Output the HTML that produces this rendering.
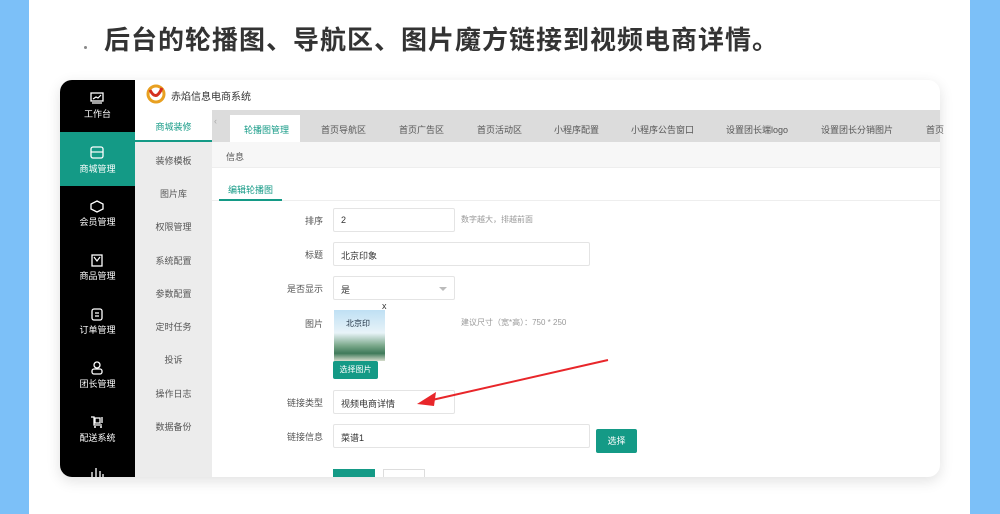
<!DOCTYPE html>
<html><head><meta charset="utf-8"><style>
*{margin:0;padding:0;box-sizing:border-box}
body{width:1000px;height:514px;overflow:hidden;background:#fff;font-family:"Liberation Sans","Noto Sans CJK SC",sans-serif;position:relative}
.a{position:absolute}
.bl{background:#7cc0f8;top:0;height:514px}
.t{font-size:9px;color:#555;white-space:nowrap}
.nav{color:#fff;font-size:9px;text-align:center;width:75px;left:60px}
.sub{left:135px;width:77px;text-align:center;font-size:9px;color:#555}
.in{border:1px solid #e4e4e4;background:#fff;height:24px;font-size:9px;color:#333;padding:6px 7px;border-radius:2px}
.lab{font-size:9px;color:#555;text-align:right;width:80px;left:243px}
.btn{background:#149a86;color:#fff;font-size:9px;border-radius:2px;text-align:center}
</style></head><body>
<div class="a bl" style="left:0;width:29px"></div>
<div class="a bl" style="left:970px;width:30px"></div>
<div class="a" style="left:84px;top:46px;width:3px;height:3px;background:#888;border-radius:50%"></div>
<div class="a" style="left:104px;top:20px;font-size:26px;font-weight:bold;color:#333;letter-spacing:1px;white-space:nowrap">后台的轮播图、导航区、图片魔方链接到视频电商详情。</div>

<div class="a" style="left:60px;top:80px;width:880px;height:397px;border-radius:12px;overflow:hidden;background:#fff;box-shadow:0 4px 14px rgba(0,0,0,.12)">
</div>
<div class="a" style="left:60px;top:80px;width:880px;height:397px;border-radius:12px;overflow:hidden">
 <div class="a" style="left:0;top:0;width:75px;height:397px;background:#000"></div>
 <div class="a" style="left:0;top:52px;width:75px;height:54px;background:#149a86"></div>
 <div class="a" style="left:75px;top:30px;width:77px;height:367px;background:#ececec"></div>
 <div class="a" style="left:75px;top:30px;width:77px;height:32px;background:#fff;border-bottom:2px solid #149a86"></div>
 <div class="a" style="left:152px;top:30px;width:728px;height:32px;background:#dcdcdc"></div>
 <div class="a" style="left:170px;top:35px;width:70px;height:27px;background:#fff"></div>
 <div class="a" style="left:152px;top:62px;width:728px;height:26px;background:#f7f7f7;border-bottom:1px solid #eee"></div>
 <div class="a" style="left:152px;top:120px;width:728px;height:1px;background:#eee"></div>
 <div class="a" style="left:159px;top:119px;width:63px;height:2px;background:#149a86"></div>
</div>
<!-- header -->
<svg class="a" style="left:146px;top:84px" width="20" height="20" viewBox="0 0 20 20"><circle cx="10" cy="10" r="8" fill="none" stroke="#e8a020" stroke-width="3"/><path d="M4 6 Q10 18 16 4" stroke="#d43020" stroke-width="3" fill="none"/></svg>
<div class="a t" style="left:171px;top:88px;font-size:10px;color:#333">赤焰信息电商系统</div>
<!-- nav -->
<svg class="a" style="left:90px;top:92px" width="14" height="12"><rect x="1" y="1" width="12" height="8" fill="none" stroke="#fff" stroke-width="1.3"/><path d="M3 7 L6 5 L8 6 L11 3 M2 11 H12" stroke="#fff" fill="none" stroke-width="1.2"/></svg>
<div class="a nav" style="top:107px">工作台</div>
<svg class="a" style="left:90px;top:146px" width="14" height="13"><rect x="1" y="1" width="12" height="11" rx="2" fill="none" stroke="#fff" stroke-width="1.3"/><path d="M1 6 H13" stroke="#fff" stroke-width="1.2"/></svg>
<div class="a nav" style="top:162px">商城管理</div>
<svg class="a" style="left:90px;top:200px" width="14" height="13"><path d="M7 1 L13 4 V9 L7 12 L1 9 V4 Z" fill="none" stroke="#fff" stroke-width="1.3"/></svg>
<div class="a nav" style="top:215px">会员管理</div>
<svg class="a" style="left:90px;top:254px" width="14" height="13"><rect x="2" y="1" width="10" height="11" fill="none" stroke="#fff" stroke-width="1.3"/><path d="M4 3 L7 7 L10 3" stroke="#fff" fill="none" stroke-width="1.2"/></svg>
<div class="a nav" style="top:269px">商品管理</div>
<svg class="a" style="left:90px;top:308px" width="14" height="13"><rect x="2" y="1" width="10" height="11" rx="2" fill="none" stroke="#fff" stroke-width="1.3"/><path d="M5 5 H9 M5 8 H9" stroke="#fff" stroke-width="1.2"/></svg>
<div class="a nav" style="top:323px">订单管理</div>
<svg class="a" style="left:90px;top:361px" width="14" height="14"><circle cx="7" cy="4" r="3" fill="none" stroke="#fff" stroke-width="1.3"/><rect x="2" y="8" width="10" height="5" rx="2" fill="none" stroke="#fff" stroke-width="1.3"/></svg>
<div class="a nav" style="top:377px">团长管理</div>
<svg class="a" style="left:90px;top:415px" width="14" height="14"><path d="M1 2 H4 V10 H12 M12 2 V8 M5 3 H10 V8 H5 Z" fill="none" stroke="#fff" stroke-width="1.3"/><circle cx="5" cy="12" r="1" fill="#fff"/><circle cx="11" cy="12" r="1" fill="#fff"/></svg>
<div class="a nav" style="top:431px">配送系统</div>
<svg class="a" style="left:90px;top:468px" width="14" height="9"><path d="M2 9 V4 M6 9 V0 M10 9 V3 M13 9 V6" stroke="#fff" stroke-width="1.3"/></svg>
<!-- sub -->
<div class="a sub" style="top:120px;color:#149a86">商城装修</div>
<div class="a sub" style="top:154px">装修模板</div>
<div class="a sub" style="top:187px">图片库</div>
<div class="a sub" style="top:220px">权限管理</div>
<div class="a sub" style="top:254px">系统配置</div>
<div class="a sub" style="top:287px">参数配置</div>
<div class="a sub" style="top:320px">定时任务</div>
<div class="a sub" style="top:353px">投诉</div>
<div class="a sub" style="top:387px">操作日志</div>
<div class="a sub" style="top:420px">数据备份</div>
<div class="a t" style="left:214px;top:116px;color:#aaa">‹</div>
<!-- tabs -->
<div class="a t" style="left:244px;top:123px;color:#149a86">轮播图管理</div>
<div class="a t" style="left:321px;top:123px">首页导航区</div>
<div class="a t" style="left:399px;top:123px">首页广告区</div>
<div class="a t" style="left:477px;top:123px">首页活动区</div>
<div class="a t" style="left:554px;top:123px">小程序配置</div>
<div class="a t" style="left:631px;top:123px">小程序公告窗口</div>
<div class="a t" style="left:726px;top:123px">设置团长端logo</div>
<div class="a t" style="left:821px;top:123px">设置团长分销图片</div>
<div class="a t" style="left:926px;top:123px">首页</div>
<div class="a t" style="left:226px;top:150px">信息</div>
<div class="a t" style="left:228px;top:183px;color:#149a86">编辑轮播图</div>
<!-- form -->
<div class="a lab" style="top:214px">排序</div>
<div class="a in" style="left:333px;top:208px;width:122px">2</div>
<div class="a t" style="left:461px;top:214px;color:#999;font-size:8px">数字越大，排越前面</div>
<div class="a lab" style="top:248px">标题</div>
<div class="a in" style="left:333px;top:242px;width:257px">北京印象</div>
<div class="a lab" style="top:282px">是否显示</div>
<div class="a in" style="left:333px;top:276px;width:122px">是<span style="position:absolute;right:7px;top:10px;border:4px solid transparent;border-top-color:#bbb"></span></div>
<div class="a lab" style="top:317px">图片</div>
<div class="a" style="left:334px;top:310px;width:51px;height:51px;background:linear-gradient(#bfe0f4 0%,#e8f3f8 45%,#7aa88a 70%,#3f7a5a 85%,#d6dccc 100%)"></div>
<div class="a t" style="left:346px;top:318px;font-size:8px;color:#234">北京印</div>
<div class="a t" style="left:382px;top:301px;color:#333">x</div>
<div class="a btn" style="left:333px;top:361px;width:45px;height:18px;line-height:18px;font-size:8px">选择图片</div>
<div class="a t" style="left:461px;top:317px;color:#999;font-size:8px">建议尺寸（宽*高）：750 * 250</div>
<div class="a lab" style="top:396px">链接类型</div>
<div class="a in" style="left:333px;top:390px;width:122px">视频电商详情</div>
<div class="a lab" style="top:430px">链接信息</div>
<div class="a in" style="left:333px;top:424px;width:257px">菜谱1</div>
<div class="a btn" style="left:596px;top:429px;width:41px;height:24px;line-height:24px">选择</div>
<div class="a" style="left:333px;top:469px;width:42px;height:8px;background:#149a86"></div>
<div class="a" style="left:383px;top:469px;width:42px;height:8px;border:1px solid #ddd;border-bottom:none"></div>
<svg class="a" style="left:0;top:0" width="1000" height="514"><path d="M608 360 L432 400" stroke="#e8262a" stroke-width="2"/><path d="M417 404 L436 392 L434 406 Z" fill="#e8262a"/></svg>
</body></html>
